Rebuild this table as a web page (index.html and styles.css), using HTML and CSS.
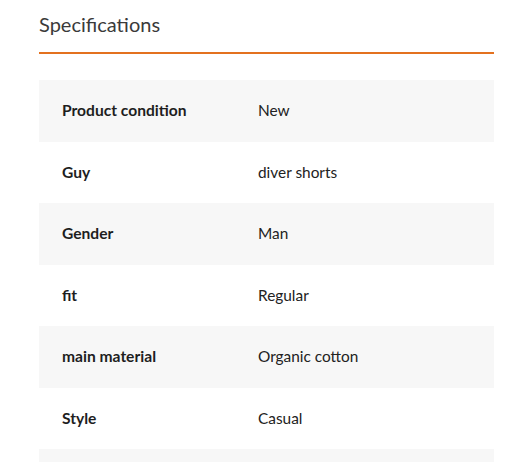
FILE: index.html
```html
<!DOCTYPE html>
<html>
<head>
<meta charset="utf-8">
<link rel="stylesheet" href="styles.css">
</head>
<body>
<section class="specs">
  <h2 class="specs-title">Specifications</h2>
  <table class="specs-table">
    <tr><th>Product condition</th><td>New</td></tr>
    <tr><th>Guy</th><td>diver shorts</td></tr>
    <tr><th>Gender</th><td>Man</td></tr>
    <tr><th>fit</th><td>Regular</td></tr>
    <tr><th>main material</th><td>Organic cotton</td></tr>
    <tr><th>Style</th><td>Casual</td></tr>
    <tr><th></th><td></td></tr>
  </table>
</section>
</body>
</html>
```

FILE: styles.css
```css
html, body {
  margin: 0;
  padding: 0;
  background: #fff;
}
body {
  font-family: Lato, "Open Sans", sans-serif;
  color: #222;
}
.specs {
  width: 455px;
  margin-left: 39px;
}
.specs-title {
  margin: 0;
  padding-top: 12px;
  height: 40px;
  font-size: 20px;
  line-height: 24px;
  font-weight: 400;
  color: #3a3a3a;
  border-bottom: 2px solid #e3711f;
}
.specs-table {
  margin-top: 26px;
  width: 100%;
  border-collapse: collapse;
  font-size: 15.4px;
}
.specs-table tr:nth-child(odd) {
  background: #f7f7f7;
}
.specs-table th,
.specs-table td {
  height: 61.5px;
  padding: 0 23px;
  box-sizing: border-box;
  text-align: left;
  vertical-align: middle;
  line-height: 21px;
}
.specs-table th {
  width: 196px;
  font-size: 15.6px;
  font-weight: 700;
  color: #1e1e1e;
}
.specs-table td {
  font-weight: 400;
  color: #222;
}
```
